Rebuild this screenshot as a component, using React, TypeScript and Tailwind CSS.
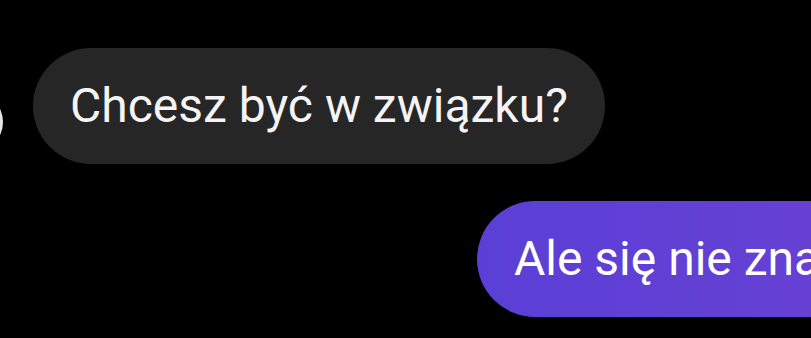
import React from 'react';

const font = { fontFamily: 'Roboto, "Noto Sans", sans-serif' };

const App: React.FC = () => {
    return (
        <div className="w-[811px] h-[338px] bg-black overflow-hidden" style={font}>
            <div className="flex items-end pt-[48px] pl-[33px]">
                <div className="w-[60px] h-[60px] ml-[-90px] mr-[30px] mb-[12px] rounded-full bg-[#e6e6e6] shrink-0" />
                <div className="rounded-full bg-[#262626] px-[37px] py-[30px] text-[48px] leading-[56px] text-[#f4f4f4] whitespace-nowrap">
                    Chcesz być w związku?
                </div>
            </div>
            <div className="flex pt-[37px] pl-[477px]">
                <div className="rounded-full bg-linear-to-r from-[#5a3fd6] to-[#6a41d3] px-[37px] py-[30px] text-[48px] leading-[56px] text-white whitespace-nowrap shrink-0">
                    Ale się nie znamy
                </div>
            </div>
        </div>
    );
};

export default App;
